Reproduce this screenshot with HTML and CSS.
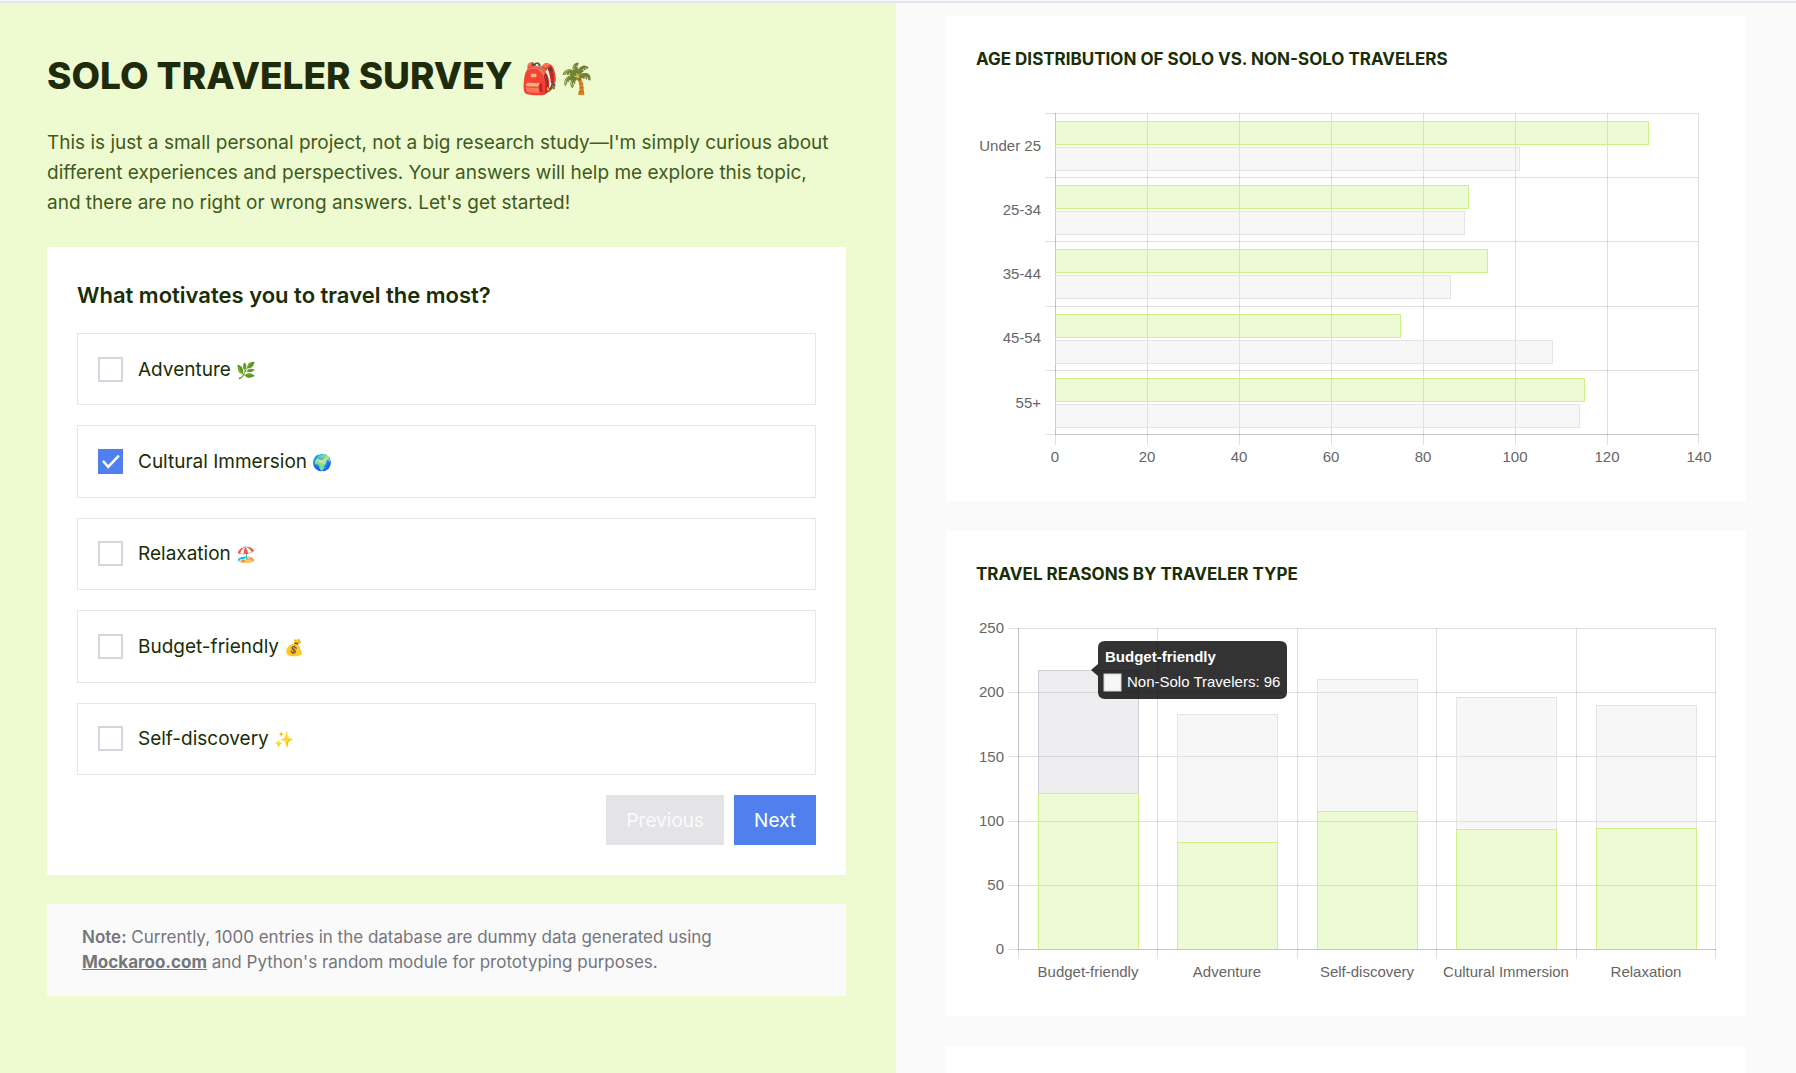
FILE: index.html
```
<!DOCTYPE html>
<html lang="en">
<head>
<meta charset="utf-8">
<meta name="viewport" content="width=device-width, initial-scale=1">
<title>Solo Traveler Survey</title>
<link rel="stylesheet" href="styles.css">
</head>
<body>
<main class="page">
  <section class="survey">
    <h1 class="title">SOLO TRAVELER SURVEY <span class="title-emoji">🎒🌴</span></h1>
    <p class="intro">This is just a small personal project, not a big research study—I'm simply curious about different experiences and perspectives. Your answers will help me explore this topic, and there are no right or wrong answers. Let's get started!</p>
    <form class="card question">
      <h2 class="question-title">What motivates you to travel the most?</h2>
      <div class="options">
        <label class="option"><input class="check" type="checkbox"><span>Adventure <span class="emoji">🌿</span></span></label>
        <label class="option"><input class="check" type="checkbox" checked><span>Cultural Immersion <span class="emoji">🌍</span></span></label>
        <label class="option"><input class="check" type="checkbox"><span>Relaxation <span class="emoji">🏖️</span></span></label>
        <label class="option"><input class="check" type="checkbox"><span>Budget-friendly <span class="emoji">💰</span></span></label>
        <label class="option"><input class="check" type="checkbox"><span>Self-discovery <span class="emoji">✨</span></span></label>
      </div>
      <div class="actions">
        <button class="btn btn-muted" type="button" disabled>Previous</button>
        <button class="btn" type="button">Next</button>
      </div>
    </form>
    <p class="note"><strong>Note:</strong> Currently, 1000 entries in the database are dummy data generated using <a href="#mockaroo">Mockaroo.com</a> and Python's random module for prototyping purposes.</p>
  </section>

  <section class="results">
    <article class="card chart-card">
      <h2 class="chart-title">AGE DISTRIBUTION OF SOLO VS. NON-SOLO TRAVELERS</h2>
      <svg class="chart" viewBox="0 0 740 371" role="img" aria-label="Age distribution">
        <g class="grid">
          <path d="M69 13H722M69 77H722M69 141H722M69 206H722M69 270H722M69 334H722"/>
          <path d="M79 13V345M171 13V345M263 13V345M355 13V345M447 13V345M539 13V345M631 13V345M722 13V345"/>
          <path d="M79 13V334M79 334H722"/>
        </g>
        <g class="solo">
          <path d="M79 21H672V44H79"/><path d="M79 85H492V108H79"/><path d="M79 149H511V172H79"/><path d="M79 214H424V237H79"/><path d="M79 278H608V301H79"/>
        </g>
        <g class="non-solo">
          <path d="M79 47H543V70H79"/><path d="M79 111H488V134H79"/><path d="M79 175H474V198H79"/><path d="M79 240H576V263H79"/><path d="M79 304H603V327H79"/>
        </g>
        <g class="ticks end">
          <text x="65" y="51">Under 25</text><text x="65" y="115">25-34</text><text x="65" y="179">35-44</text><text x="65" y="243">45-54</text><text x="65" y="308">55+</text>
        </g>
        <g class="ticks">
          <text x="79" y="362">0</text><text x="171" y="362">20</text><text x="263" y="362">40</text><text x="355" y="362">60</text><text x="447" y="362">80</text><text x="539" y="362">100</text><text x="631" y="362">120</text><text x="723" y="362">140</text>
        </g>
      </svg>
    </article>

    <article class="card chart-card">
      <h2 class="chart-title">TRAVEL REASONS BY TRAVELER TYPE</h2>
      <svg class="chart" viewBox="0 0 740 371" role="img" aria-label="Travel reasons">
        <g class="grid">
          <path d="M32 13H740M32 77H740M32 141H740M32 206H740M32 270H740M32 334H740"/>
          <path d="M42 13V344M181 13V344M321 13V344M460 13V344M600 13V344M739 13V344"/>
          <path d="M42 13V334M42 334H740"/>
        </g>
        <path class="hovered" d="M62 178V55H162V178"/>
        <g class="non-solo">
          <path d="M201 227V99H301V227"/><path d="M341 196V64H441V196"/><path d="M480 214V82H580V214"/><path d="M620 213V90H720V213"/>
        </g>
        <g class="solo">
          <path d="M62 334V178H162V334"/><path d="M201 334V227H301V334"/><path d="M341 334V196H441V334"/><path d="M480 334V214H580V334"/><path d="M620 334V213H720V334"/>
        </g>
        <g class="ticks end">
          <text x="28" y="18">250</text><text x="28" y="82">200</text><text x="28" y="147">150</text><text x="28" y="211">100</text><text x="28" y="275">50</text><text x="28" y="339">0</text>
        </g>
        <g class="ticks">
          <text x="112" y="362">Budget-friendly</text><text x="251" y="362">Adventure</text><text x="391" y="362">Self-discovery</text><text x="530" y="362">Cultural Immersion</text><text x="670" y="362">Relaxation</text>
        </g>
        <g class="tooltip">
          <path class="tooltip-box" d="M129 26H304Q311 26 311 33V77Q311 84 304 84H129Q122 84 122 77V61L115 55L122 49V33Q122 26 129 26Z"/>
          <text class="tooltip-title" x="129" y="47">Budget-friendly</text>
          <rect class="tooltip-swatch" x="128" y="59" width="17" height="17"/>
          <text x="151" y="72">Non-Solo Travelers: 96</text>
        </g>
      </svg>
    </article>

    <article class="card next-card"></article>
  </section>
</main>
</body>
</html>
```
FILE: styles.css
```
* { box-sizing: border-box; margin: 0; }

body {
  display: flex;
  flex-direction: column;
  min-height: 100vh;
  border-top: 1px solid #f8f8fc;
  background: #fafafa;
  color: #1a2e05;
  font-family: Inter, "Noto Sans", sans-serif;
  font-size: 19px;
}

.page {
  display: grid;
  grid-template-columns: 896fr 900fr;
  flex: 1;
  border-top: 2px solid #e5e5ee;
}

.survey {
  display: flex;
  flex-direction: column;
  gap: 29px;
  padding: 50px 50px 50px 47px;
  background: #eefbd0;
}

.results {
  display: flex;
  flex-direction: column;
  gap: 30px;
  padding: 13px 50px 0;
}

.card {
  padding: 30px;
  background: #fff;
}

.title {
  color: #1e2b0c;
  font-size: 37px;
  font-weight: 800;
  line-height: 46px;
}

.title-emoji {
  font-size: 30px;
  line-height: 1;
}

.intro {
  max-width: 790px;
  color: #3f5a20;
  line-height: 30px;
}

.question {
  display: flex;
  flex-direction: column;
  gap: 20px;
}

.question-title {
  font-size: 22px;
  font-weight: 600;
  line-height: 36px;
}

.options {
  display: grid;
  grid-auto-rows: 1fr;
  gap: 20px;
  min-height: 442px;
}

.option {
  display: flex;
  align-items: center;
  gap: 15px;
  padding: 0 20px;
  border: 1px solid #e6e6ec;
}

.emoji { font-size: 16px; }

.check {
  appearance: none;
  display: grid;
  place-items: center;
  width: 25px;
  height: 25px;
  border: 2px solid #d3d6dc;
  background: #fff;
}

.check:checked {
  border-color: #4f80ee;
  background: #4f80ee;
}

.check:checked::after {
  content: "";
  width: 21px;
  height: 21px;
  background: #fff;
  clip-path: polygon(10% 51%, 18% 42%, 39% 66%, 86% 17%, 94% 26%, 39% 84%);
}

.actions {
  display: flex;
  justify-content: flex-end;
  gap: 10px;
}

.btn {
  height: 50px;
  padding: 0 20px;
  border: 0;
  background: #4f80ee;
  color: #fff;
  font: inherit;
}

.btn-muted {
  background: #e4e4e7;
  color: #fafafa;
}

.note {
  padding: 21px 35px;
  background: #fafafa;
  color: #75757c;
  font-size: 17px;
  line-height: 25px;
}

.note strong { font-weight: 600; }

.note a {
  color: inherit;
  font-weight: 700;
}

.chart-card {
  display: flex;
  flex-direction: column;
  gap: 27px;
}

.chart-title {
  font-size: 17px;
  font-weight: 700;
  line-height: 27px;
}

.chart {
  display: block;
  width: 100%;
  height: auto;
  font-family: "Liberation Sans", Arial, sans-serif;
  font-size: 15px;
}

.next-card {
  flex: 1;
  padding: 0;
}

.grid, .solo, .non-solo, .hovered { shape-rendering: crispEdges; }
.grid { fill: none; stroke: rgba(0, 0, 0, .12); }
.solo { fill: rgba(190, 242, 100, .28); stroke: #cdf187; }
.non-solo { fill: rgba(228, 228, 231, .3); stroke: #e4e4e7; }
.hovered { fill: rgba(200, 200, 208, .3); stroke: #cfced8; }
.ticks { fill: #666; text-anchor: middle; }
.ticks.end { text-anchor: end; }
.tooltip { fill: #fff; }
.tooltip-box { fill: rgba(0, 0, 0, .8); }
.tooltip-title { font-weight: 700; }
.tooltip-swatch { fill: #f7f7f8; stroke: #d4d4d8; }
```
